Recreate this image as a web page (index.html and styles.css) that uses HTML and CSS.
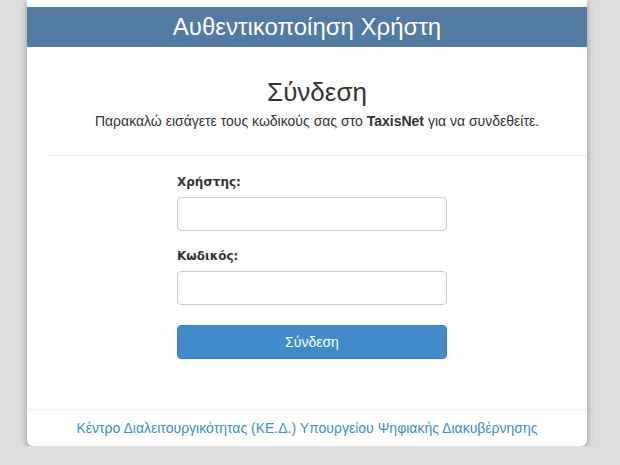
FILE: index.html
```html
<!DOCTYPE html>
<html lang="el">
<head>
  <meta charset="UTF-8" />
  <title>Αυθεντικοποίηση Χρήστη</title>
  <link rel="stylesheet" href="styles.css">
</head>
<body>
  <div class="card">
    <div class="card-head">Αυθεντικοποίηση Χρήστη</div>
    <div class="card-body">
      <h2 class="title">Σύνδεση</h2>
      <p class="subtitle">Παρακαλώ εισάγετε τους κωδικούς σας στο <b>TaxisNet</b> για να συνδεθείτε.</p>
      <hr class="sep">
      <form class="login">
        <label for="user">Χρήστης:</label>
        <input id="user" type="text">
        <label for="pass">Κωδικός:</label>
        <input id="pass" type="password">
        <button type="button">Σύνδεση</button>
      </form>
    </div>
    <div class="card-foot">
      <a href="#">Κέντρο Διαλειτουργικότητας (ΚΕ.Δ.) Υπουργείου Ψηφιακής Διακυβέρνησης</a>
    </div>
  </div>
</body>
</html>
```

FILE: styles.css
```css
body {
  margin: 0;
  background: #dedede;
  font-family: "Liberation Sans", Arial, sans-serif;
  color: #333;
}
.card {
  width: 560px;
  margin-left: 27px;
  padding-top: 7px;
  background: #fff;
  border-radius: 0 0 6px 6px;
  box-shadow: 0 3px 7px rgba(0,0,0,0.35);
}
.card-head {
  height: 40px;
  line-height: 40px;
  background: #527aa3;
  color: #fff;
  font-size: 24px;
  text-align: center;
}
.card-body {
  padding: 30px 0 0 20px;
}
.title {
  margin: 0;
  font-size: 26px;
  font-weight: normal;
  line-height: 30px;
  text-align: center;
}
.subtitle {
  margin: 5px 0 0;
  font-size: 14px;
  line-height: 18px;
  text-align: center;
}
.sep {
  margin: 25px 0 0;
  border: 0;
  border-top: 1px solid #eee;
}
.login {
  width: 270px;
  margin: 16px 0 0 130px;
  display: flex;
  flex-direction: column;
}
.login label {
  font-family: "DejaVu Sans", Verdana, sans-serif;
  font-weight: bold;
  font-size: 12px;
  line-height: 20px;
  margin-bottom: 5px;
}
.login input {
  box-sizing: border-box;
  height: 34px;
  border: 1px solid #ccc;
  border-radius: 4px;
  margin-bottom: 15px;
}
.login button {
  margin-top: 5px;
  height: 34px;
  background: #428bca;
  border: 1px solid #3b7fbd;
  border-radius: 4px;
  color: #fff;
  font-family: "Liberation Sans", Arial, sans-serif;
  font-size: 14px;
}
.card-foot {
  margin-top: 50px;
  border-top: 1px solid #eee;
  padding: 8px 0 8px;
  text-align: center;
  font-size: 14px;
  line-height: 20px;
}
.card-foot a {
  color: #428bca;
  text-decoration: none;
}
```
